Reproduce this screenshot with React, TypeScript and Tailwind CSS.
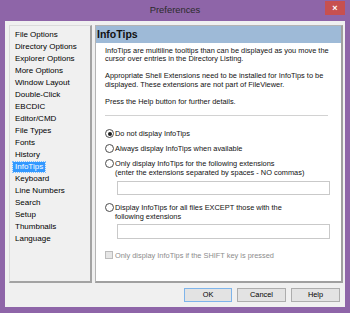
import { useState } from 'react'

const pages = [
  'File Options',
  'Directory Options',
  'Explorer Options',
  'More Options',
  'Window Layout',
  'Double-Click',
  'EBCDIC',
  'Editor/CMD',
  'File Types',
  'Fonts',
  'History',
  'InfoTips',
  'Keyboard',
  'Line Numbers',
  'Search',
  'Setup',
  'Thumbnails',
  'Language'
]

function Radio({ checked }: { checked?: boolean }) {
  return (
    <span className="w-[9px] h-[9px] shrink-0 rounded-full border border-[#4d4d4d] bg-white flex items-center justify-center">
      {checked && <span className="w-[4px] h-[4px] rounded-full bg-[#1e1e1e]" />}
    </span>
  )
}

export default function App() {
  const [selected, setSelected] = useState('InfoTips')
  const [mode, setMode] = useState(0)

  const options = [
    ['Do not display InfoTips'],
    ['Always display InfoTips when available'],
    [
      'Only display InfoTips for the following extensions',
      '(enter the extensions separated by spaces - NO commas)'
    ],
    ['Display InfoTips for all files EXCEPT those with the', 'following extensions']
  ]

  return (
    <div
      className="w-[350px] h-[313px] bg-[#8e65a8] flex flex-col"
      style={{ fontFamily: '"Liberation Sans", Arial, sans-serif' }}
    >
      {/* title bar */}
      <div className="h-[21px] flex items-start">
        <div className="w-[25px]" />
        <div className="flex-1 h-[20px] flex items-center justify-center text-[9.4px] text-[#2b2b2b]">
          Preferences
        </div>
        <div className="w-[20px] h-[14px] mt-[1px] mr-[5px] bg-[#c75050] flex items-center justify-center text-white text-[9px] font-bold leading-none">
          ×
        </div>
      </div>

      {/* client area */}
      <div className="mx-[5px] h-[286px] bg-[#f0f0f0] flex flex-col pt-[4px] pl-[4px] pr-[2px]">
        <div className="h-[258px] flex gap-[3px]">
          {/* page list */}
          <div className="w-[83px] border-t border-l border-[#dadada] border-r-2 border-b-2 border-r-[#a3a3a3] border-b-[#a3a3a3] pt-[3px] pl-[3px]">
            {pages.map(p => (
              <div key={p} className="h-[12px] flex items-center">
                <span
                  onClick={() => setSelected(p)}
                  className={
                    p === selected
                      ? 'h-[10px] leading-[10px] px-[2px] text-[8px] bg-[#3399ff] text-white outline outline-dotted outline-[#7fbfff]'
                      : 'h-[10px] leading-[10px] px-[2px] text-[8px] text-black'
                  }
                >
                  {p}
                </span>
              </div>
            ))}
          </div>

          {/* page content */}
          <div className="flex-1 bg-white border-t border-l border-[#b4b4b4] border-r-2 border-b-2 border-r-[#a0a0a0] border-b-[#a0a0a0] flex flex-col">
            <div className="h-[17px] bg-[#9ebad7] flex items-center pl-[1px] pt-[1px] text-[10.5px] font-bold text-[#111]">
              InfoTips
            </div>
            <div className="pl-[9px] pr-[11px] pt-[3.5px] text-[7.4px] leading-[8.5px] text-[#111]">
              <p>
                InfoTips are multiline tooltips than can be displayed as you move the
                <br />
                cursor over entries in the Directory Listing.
              </p>
              <p className="mt-[8.5px]">
                Appropriate Shell Extensions need to be installed for InfoTips to be
                <br />
                displayed. These extensions are not part of FileViewer.
              </p>
              <p className="mt-[8.5px]">Press the Help button for further details.</p>

              <div className="mt-[9px] h-px bg-[#d2d2d2] mr-[2px]" />

              <div className="mt-[13px] flex flex-col">
                {options.map((lines, i) => (
                  <div key={i} className={i === 0 ? '' : i === 3 ? 'mt-[7.5px]' : 'mt-[6px]'}>
                    <div
                      className="flex items-start gap-[1px] leading-[9px] cursor-default"
                      onClick={() => setMode(i)}
                    >
                      <Radio checked={mode === i} />
                      <div>
                        {lines.map(l => (
                          <div key={l}>{l}</div>
                        ))}
                      </div>
                    </div>
                    {i >= 2 && (
                      <div className="mt-[3.5px] ml-[12px] h-[14.5px] bg-white border border-[#c9c9c9]" />
                    )}
                  </div>
                ))}
                <div className="mt-[12px] flex items-start gap-[2px] leading-[9px] text-[#8c8c8c]">
                  <span className="w-[8px] h-[8px] shrink-0 border border-[#bcbcbc] bg-[#e6e6e6]" />
                  <span>Only display InfoTips if the SHIFT key is pressed</span>
                </div>
              </div>
            </div>
          </div>
        </div>

        {/* buttons */}
        <div className="mt-[5px] h-[14px] flex justify-end gap-[5px] pr-[3px]">
          <button className="w-[48px] h-[14px] bg-[#e3e3e3] border border-[#7eb4ea] text-[7.4px] text-black leading-none">
            OK
          </button>
          <button className="w-[49px] h-[14px] bg-[#e3e3e3] border border-[#adadad] text-[7.4px] text-black leading-none">
            Cancel
          </button>
          <button className="w-[49px] h-[14px] bg-[#e3e3e3] border border-[#adadad] text-[7.4px] text-black leading-none">
            Help
          </button>
        </div>
      </div>
    </div>
  )
}
